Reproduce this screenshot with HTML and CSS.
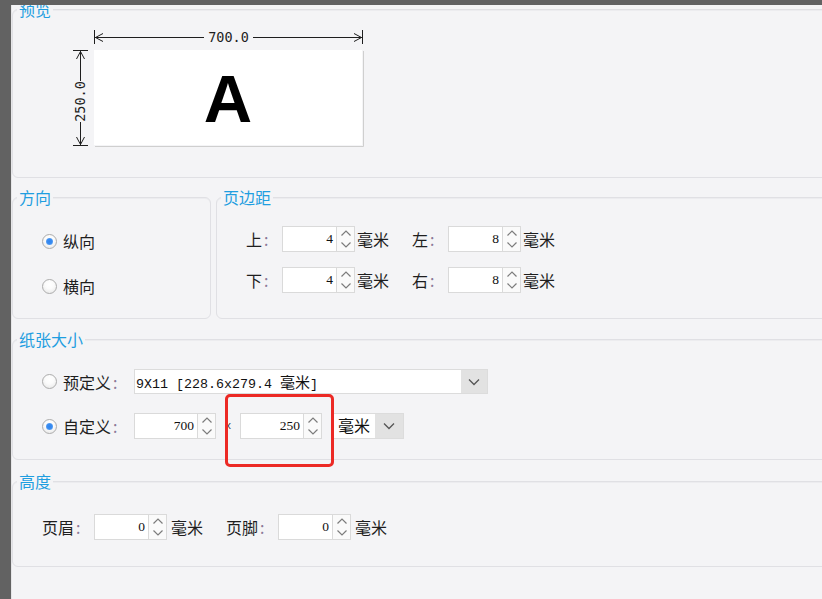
FILE: index.html
```html
<!DOCTYPE html>
<html lang="zh-CN">
<head>
<meta charset="utf-8">
<title>页面设置</title>
<link rel="stylesheet" href="styles.css">
</head>
<body>
<div class="window">
  <section class="group g-preview">
    <div class="gtitle">预览</div>
    <svg class="dim" width="300" height="125" viewBox="0 0 300 125">
      <rect x="24" y="22" width="268" height="95" fill="#ffffff"/>
      <path d="M293.5 23 V118.5 H25" fill="none" stroke="#cfcfcf" stroke-width="1"/>
      <g fill="none" stroke="#1e1e1e" stroke-width="1">
        <path d="M24.5 2 V16 M292.5 2 V16 M25 9.5 H134 M183 9.5 H292"/>
        <path d="M33 5.5 L25.5 9.5 L33 13.5 M284 5.5 L291.5 9.5 L284 13.5"/>
        <path d="M3 22.5 H18 M3 117.5 H18 M10.5 23 V53 M10.5 94 V117"/>
        <path d="M6.5 31 L10.5 23.5 L14.5 31 M6.5 109 L10.5 116.5 L14.5 109"/>
      </g>
      <text class="dimtext" x="158.5" y="14" text-anchor="middle">700.0</text>
      <text class="dimtext" transform="translate(15 73.5) rotate(-90)" text-anchor="middle">250.0</text>
      <text class="bigA" x="158" y="94" text-anchor="middle">A</text>
    </svg>
  </section>

  <div class="grow">
    <section class="group g-dir">
      <div class="gtitle">方向</div>
      <div class="radio-row first"><span class="radio on"></span><span>纵向</span></div>
      <div class="radio-row second"><span class="radio"></span><span>横向</span></div>
    </section>
    <section class="group g-margin">
      <div class="gtitle">页边距</div>
      <div class="frow first">
        <div class="field"><span class="lbl">上<i>:</i></span><span class="spin"><span class="num">4</span><span class="arr"><svg width="16" height="24" viewBox="0 0 16 24"><path d="M3.5 8.5 L8 4 L12.5 8.5 M3.5 15.5 L8 20 L12.5 15.5" fill="none" stroke="#7c7c7c" stroke-width="1.2"/></svg></span></span><span class="unit">毫米</span></div>
        <div class="field next"><span class="lbl">左<i>:</i></span><span class="spin"><span class="num">8</span><span class="arr"><svg width="16" height="24" viewBox="0 0 16 24"><path d="M3.5 8.5 L8 4 L12.5 8.5 M3.5 15.5 L8 20 L12.5 15.5" fill="none" stroke="#7c7c7c" stroke-width="1.2"/></svg></span></span><span class="unit">毫米</span></div>
      </div>
      <div class="frow second">
        <div class="field"><span class="lbl">下<i>:</i></span><span class="spin"><span class="num">4</span><span class="arr"><svg width="16" height="24" viewBox="0 0 16 24"><path d="M3.5 8.5 L8 4 L12.5 8.5 M3.5 15.5 L8 20 L12.5 15.5" fill="none" stroke="#7c7c7c" stroke-width="1.2"/></svg></span></span><span class="unit">毫米</span></div>
        <div class="field next"><span class="lbl">右<i>:</i></span><span class="spin"><span class="num">8</span><span class="arr"><svg width="16" height="24" viewBox="0 0 16 24"><path d="M3.5 8.5 L8 4 L12.5 8.5 M3.5 15.5 L8 20 L12.5 15.5" fill="none" stroke="#7c7c7c" stroke-width="1.2"/></svg></span></span><span class="unit">毫米</span></div>
      </div>
    </section>
  </div>

  <section class="group g-paper">
    <div class="gtitle">纸张大小</div>
    <div class="prow first">
      <span class="radio"></span><span class="plbl">预定义<i>:</i></span>
      <div class="combo wide"><span class="ctext">9X11 [228.6x279.4 <em>毫米</em>]</span><span class="cbtn"><svg width="12" height="8" viewBox="0 0 12 8"><path d="M1 1.5 L6 6.5 L11 1.5" fill="none" stroke="#555" stroke-width="1.3"/></svg></span></div>
    </div>
    <div class="prow second">
      <span class="radio on"></span><span class="plbl">自定义<i>:</i></span>
      <span class="spin wide"><span class="num">700</span><span class="arr"><svg width="16" height="24" viewBox="0 0 16 24"><path d="M3.5 8.5 L8 4 L12.5 8.5 M3.5 15.5 L8 20 L12.5 15.5" fill="none" stroke="#7c7c7c" stroke-width="1.2"/></svg></span></span>
      <span class="sep">x</span>
      <span class="spin wide"><span class="num">250</span><span class="arr"><svg width="16" height="24" viewBox="0 0 16 24"><path d="M3.5 8.5 L8 4 L12.5 8.5 M3.5 15.5 L8 20 L12.5 15.5" fill="none" stroke="#7c7c7c" stroke-width="1.2"/></svg></span></span>
      <div class="combo unitcombo"><span class="ctext cjk">毫米</span><span class="cbtn"><svg width="12" height="8" viewBox="0 0 12 8"><path d="M1 1.5 L6 6.5 L11 1.5" fill="none" stroke="#555" stroke-width="1.3"/></svg></span></div>
    </div>
    <div class="highlight"></div>
  </section>

  <section class="group g-height">
    <div class="gtitle">高度</div>
    <div class="frow">
      <div class="field"><span class="lbl long">页眉<i>:</i></span><span class="spin"><span class="num">0</span><span class="arr"><svg width="16" height="24" viewBox="0 0 16 24"><path d="M3.5 8.5 L8 4 L12.5 8.5 M3.5 15.5 L8 20 L12.5 15.5" fill="none" stroke="#7c7c7c" stroke-width="1.2"/></svg></span></span><span class="unit far">毫米</span></div>
      <div class="field next2"><span class="lbl long">页脚<i>:</i></span><span class="spin"><span class="num">0</span><span class="arr"><svg width="16" height="24" viewBox="0 0 16 24"><path d="M3.5 8.5 L8 4 L12.5 8.5 M3.5 15.5 L8 20 L12.5 15.5" fill="none" stroke="#7c7c7c" stroke-width="1.2"/></svg></span></span><span class="unit far">毫米</span></div>
    </div>
  </section>
</div>
</body>
</html>
```

FILE: styles.css
```css
html, body {
  margin: 0;
  padding: 0;
  width: 822px;
  height: 599px;
  overflow: hidden;
  background: #626262;
}

body {
  font-family: "Noto Sans CJK SC", "Microsoft YaHei", sans-serif;
  font-size: 16px;
  line-height: 20px;
  color: #1e1e1e;
}

.window {
  margin: 5px 0 0 11px;
  width: 830px;
  height: 594px;
  background: #f4f4f6;
  border-left: 1px solid #e6e6e8;
  overflow: hidden;
}

.group {
  box-sizing: border-box;
  border: 1px solid #e0e0e4;
  box-shadow: inset 0 1px 0 #ececef;
  border-radius: 6px;
  background: #f4f4f6;
}

.gtitle {
  margin: -11px 0 0 4px;
  padding: 0 2px;
  width: fit-content;
  background: #f4f4f6;
  color: #1f9ee0;
  line-height: 20px;
  font-size: 16px;
}

/* preview */
.g-preview {
  margin-top: 4px;
  height: 169px;
}

.dim {
  display: block;
  margin: 9px 0 0 57px;
}

.dimtext {
  font-family: "DejaVu Sans Mono", monospace;
  font-size: 13.5px;
  fill: #1e1e1e;
}

.bigA {
  font-family: "Liberation Sans", Arial, sans-serif;
  font-weight: bold;
  font-size: 67px;
  fill: #000;
}

/* direction + margin row */
.grow {
  display: flex;
  gap: 5px;
  margin-top: 19px;
}

.g-dir {
  width: 199px;
  height: 122px;
  flex: none;
}

.g-margin {
  flex: 1;
  height: 122px;
}

.radio-row {
  display: flex;
  align-items: center;
  height: 20px;
  margin-left: 29px;
}

.radio-row.first { margin-top: 24px; }
.radio-row.second { margin-top: 25px; }

.radio {
  box-sizing: border-box;
  width: 15px;
  height: 15px;
  flex: none;
  border-radius: 50%;
  border: 1px solid #acacac;
  background: radial-gradient(circle at 50% 35%, #ffffff 0, #fbfbfb 40%, #e4e4e4 100%);
  display: inline-flex;
  align-items: center;
  justify-content: center;
  margin-right: 6px;
}

.radio.on::after {
  content: "";
  width: 7px;
  height: 7px;
  border-radius: 50%;
  background: radial-gradient(circle, #2f84ee 0, #3a8cf0 50%, #9cc6f6 100%);
}

.frow {
  display: flex;
  align-items: center;
  padding-left: 29px;
}

.g-margin .frow { padding-left: 29px; }
.g-margin .frow.first { margin-top: 19px; }
.g-margin .frow.second { margin-top: 15px; }

.field {
  display: flex;
  align-items: center;
}

.field.next { margin-left: 22px; }
.field.next2 { margin-left: 23px; }

.lbl {
  width: 36px;
  flex: none;
}

.lbl.long { width: 52px; }

.lbl i, .plbl i {
  font-style: normal;
  color: #8a7898;
  margin-left: 2px;
}

.spin {
  display: flex;
  height: 26px;
  flex: none;
}

.spin .num {
  box-sizing: border-box;
  width: 55px;
  height: 26px;
  border: 1px solid #dadada;
  background: #ffffff;
  text-align: right;
  padding-right: 3px;
  font-family: "Liberation Serif", "Times New Roman", serif;
  font-size: 13.5px;
  line-height: 24px;
  color: #111;
}

.spin .arr {
  box-sizing: border-box;
  width: 18px;
  height: 26px;
  border: 1px solid #dadada;
  border-left: none;
  background: #fafafa;
  display: flex;
  align-items: center;
  justify-content: center;
}

.spin .arr svg { display: block; }

.spin.wide .num { width: 64px; }

.unit {
  margin-left: 2px;
  width: 33px;
}

.unit.far { margin-left: 4px; width: 32px; }

/* paper size */
.g-paper {
  position: relative;
  margin-top: 20px;
  height: 121px;
}

.prow {
  display: flex;
  align-items: center;
  padding-left: 29px;
}

.prow.first { margin-top: 20px; height: 25px; }
.prow.second { margin-top: 19px; height: 26px; }

.plbl {
  width: 71px;
  flex: none;
}

.combo {
  box-sizing: border-box;
  display: flex;
  border: 1px solid #dcdcdc;
  background: #ffffff;
}

.combo.wide {
  width: 354px;
  height: 25px;
}

.ctext {
  flex: 1;
  padding-left: 1px;
  font-family: "Liberation Mono", "Courier New", monospace;
  font-size: 13.33px;
  line-height: 23px;
  color: #111;
  white-space: nowrap;
}

.ctext em {
  font-style: normal;
  font-family: "Noto Sans CJK SC", sans-serif;
  font-size: 15px;
}

.ctext.cjk {
  font-family: "Noto Sans CJK SC", sans-serif;
  font-size: 16px;
  padding-left: 6px;
}

.cbtn {
  width: 26px;
  flex: none;
  background: #e2e2e2;
  display: flex;
  align-items: center;
  justify-content: center;
}

.sep {
  width: 24px;
  text-align: center;
  font-family: "Liberation Mono", monospace;
  font-size: 11px;
  color: #444;
}

.unitcombo {
  margin-left: 9px;
  width: 73px;
  height: 26px;
}

.unitcombo .cbtn { width: 28px; }

.highlight {
  position: absolute;
  left: 212px;
  top: 54px;
  width: 109px;
  height: 73px;
  box-sizing: border-box;
  border: 3px solid #ec2a25;
  border-radius: 5px;
}

/* height */
.g-height {
  margin-top: 21px;
  height: 86px;
}

.g-height .frow { margin-top: 23px; }
```
